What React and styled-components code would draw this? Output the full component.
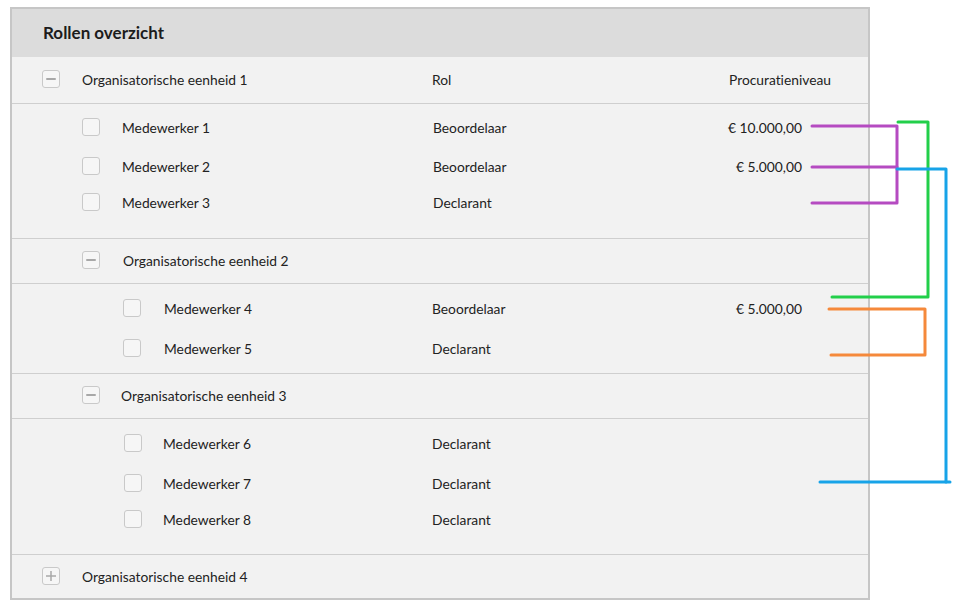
import React from 'react';
import styled, { createGlobalStyle } from 'styled-components';

const GlobalStyle = createGlobalStyle`
    html, body {
        margin: 0;
        padding: 0;
        background: #ffffff;
    }
    body {
        font-family: Lato, "Open Sans", "Liberation Sans", sans-serif;
        font-variant-ligatures: none;
        color: #222;
    }
`;

const Page = styled.div`
    position: relative;
    width: 954px;
    height: 607px;
    padding: 7px 0 0 10px;
    box-sizing: border-box;
`;

const Panel = styled.div`
    width: 860px;
    border: 2px solid #c6c6c6;
    box-sizing: border-box;
    background: #f2f2f2;
`;

const Header = styled.div`
    height: 48px;
    box-sizing: border-box;
    padding: 0 0 2px 31px;
    display: flex;
    align-items: center;
    background: #dcdcdc;
`;

const Title = styled.h1`
    margin: 0;
    font-size: 17px;
    font-weight: 700;
    color: #1c1c1c;
`;

const UnitRow = styled.div`
    height: ${props => props.$h + (props.$last ? 0 : 1)}px;
    box-sizing: border-box;
    padding-bottom: ${props => (props.$last ? 1 : 2)}px;
    display: flex;
    align-items: center;
    border-bottom: ${props => (props.$last ? 'none' : '1px solid #cfcfcf')};
    font-size: 13.8px;
`;

const Group = styled.div`
    padding: ${props => props.$pt}px 0 ${props => props.$pb}px;
    border-bottom: 1px solid #cfcfcf;
`;

const MemberRow = styled.div`
    height: 36px;
    box-sizing: border-box;
    padding-bottom: 2px;
    margin-top: ${props => props.$mt}px;
    display: flex;
    align-items: center;
    font-size: 13.8px;
`;

const NameCell = styled.div`
    width: 420px;
    box-sizing: border-box;
    padding-left: ${props => props.$indent}px;
    display: flex;
    align-items: center;
    gap: ${props => props.$gap}px;
`;

const RoleCell = styled.div`
    flex: 1;
    padding-left: ${props => props.$shift || 0}px;
`;

const AmountCell = styled.div`
    text-align: right;
    padding-right: ${props => props.$pr}px;
`;

const Box = styled.div`
    width: 16px;
    height: 16px;
    flex: none;
    border: 1px solid #c9c9c9;
    border-radius: 3px;
    background: #f6f6f6;
    display: flex;
    align-items: center;
    justify-content: center;
    color: #a8a8a8;
`;

const Overlay = styled.svg`
    position: absolute;
    top: 0;
    left: 0;
    pointer-events: none;
`;

const Minus = () => (
    <svg width="10" height="10" viewBox="0 0 10 10">
        <line x1="1" y1="5" x2="9" y2="5" stroke="currentColor" strokeWidth="2" strokeLinecap="round" />
    </svg>
);

const Plus = () => (
    <svg width="12" height="12" viewBox="0 0 12 12">
        <line x1="1" y1="6" x2="11" y2="6" stroke="currentColor" strokeWidth="1.5" />
        <line x1="6" y1="1" x2="6" y2="11" stroke="currentColor" strokeWidth="1.5" />
    </svg>
);

const groups = [
    {
        unit: 'Organisatorische eenheid 1', unitIndent: 30, unitGap: 22, unitH: 46,
        memberIndent: 70, memberGap: 22, pt: 6, pb: 17, roleShift: 1,
        members: [
            { name: 'Medewerker 1', role: 'Beoordelaar', amount: '€ 10.000,00', mt: 0 },
            { name: 'Medewerker 2', role: 'Beoordelaar', amount: '€ 5.000,00', mt: 3 },
            { name: 'Medewerker 3', role: 'Declarant', amount: '', mt: 0 },
        ],
    },
    {
        unit: 'Organisatorische eenheid 2', unitIndent: 70, unitGap: 23, unitH: 44,
        memberIndent: 111, memberGap: 23, pt: 7, pb: 6, roleShift: 0,
        members: [
            { name: 'Medewerker 4', role: 'Beoordelaar', amount: '€ 5.000,00', mt: 0 },
            { name: 'Medewerker 5', role: 'Declarant', amount: '', mt: 4 },
        ],
    },
    {
        unit: 'Organisatorische eenheid 3', unitIndent: 70, unitGap: 21, unitH: 44,
        memberIndent: 112, memberGap: 21, pt: 7, pb: 16, roleShift: 0,
        members: [
            { name: 'Medewerker 6', role: 'Declarant', amount: '', mt: 0 },
            { name: 'Medewerker 7', role: 'Declarant', amount: '', mt: 4 },
            { name: 'Medewerker 8', role: 'Declarant', amount: '', mt: 0 },
        ],
    },
];

const brackets = [
    { color: '#22cf4a', points: '898,122 928,122 928,297 832,297' },
    { color: '#b54bc1', points: '812,126 897,126 897,203 812,203' },
    { color: '#b54bc1', points: '812,167 897,167' },
    { color: '#17a3e8', points: '897,169 946,169 946,482 820,482' },
    { color: '#17a3e8', points: '946,482 950,482' },
    { color: '#f5893b', points: '829,309 925,309 925,355 831,355' },
];

const App = () => {
    return (
        <Page>
            <GlobalStyle />
            <Panel>
                <Header>
                    <Title>Rollen overzicht</Title>
                </Header>

                {groups.map((group, i) => (
                    <React.Fragment key={group.unit}>
                        <UnitRow $h={group.unitH}>
                            <NameCell $indent={group.unitIndent} $gap={group.unitGap}>
                                <Box><Minus /></Box>
                                {group.unit}
                            </NameCell>
                            {i === 0 && (
                                <>
                                    <RoleCell $shift={-1}>Rol</RoleCell>
                                    <AmountCell $pr={37}>Procuratieniveau</AmountCell>
                                </>
                            )}
                        </UnitRow>
                        <Group $pt={group.pt} $pb={group.pb}>
                            {group.members.map(member => (
                                <MemberRow key={member.name} $mt={member.mt}>
                                    <NameCell $indent={group.memberIndent} $gap={group.memberGap}>
                                        <Box />
                                        {member.name}
                                    </NameCell>
                                    <RoleCell $shift={group.roleShift}>{member.role}</RoleCell>
                                    <AmountCell $pr={66}>{member.amount}</AmountCell>
                                </MemberRow>
                            ))}
                        </Group>
                    </React.Fragment>
                ))}

                <UnitRow $h={43} $last>
                    <NameCell $indent={30} $gap={22}>
                        <Box><Plus /></Box>
                        Organisatorische eenheid 4
                    </NameCell>
                </UnitRow>
            </Panel>

            <Overlay width="954" height="607" viewBox="0 0 954 607">
                {brackets.map((b, i) => (
                    <polyline
                        key={i}
                        points={b.points}
                        fill="none"
                        stroke={b.color}
                        strokeWidth="3"
                        strokeLinejoin="round"
                        strokeLinecap="round"
                    />
                ))}
            </Overlay>
        </Page>
    );
};

export default App;
